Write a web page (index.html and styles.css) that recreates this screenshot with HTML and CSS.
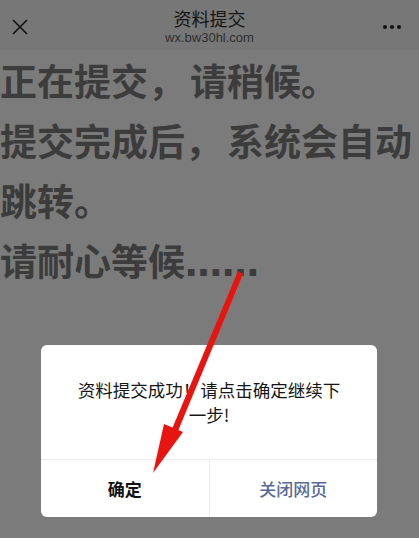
FILE: index.html
```html
<!DOCTYPE html>
<html lang="zh-CN">
<head>
<meta charset="UTF-8">
<meta name="viewport" content="width=device-width, initial-scale=1.0">
<title>资料提交</title>
<link rel="stylesheet" href="styles.css">
</head>
<body>
<div class="topbar">
    <div class="close-btn">
        <svg width="16" height="16" viewBox="0 0 16 16">
            <path d="M1 1 L15 15 M15 1 L1 15" stroke="#111" stroke-width="1.6" fill="none"/>
        </svg>
    </div>
    <div class="title-box">
        <div class="title">资料提交</div>
        <div class="subtitle">wx.bw30hl.com</div>
    </div>
    <div class="more-btn">
        <span class="dot"></span><span class="dot"></span><span class="dot"></span>
    </div>
</div>

<div class="content">
    <p>正在提交<span class="comma">，</span>请稍候。</p>
    <p>提交完成后<span class="comma">，</span>系统会自动跳转。</p>
    <p>请耐心等候<span class="dots">……</span></p>
</div>

<div class="dialog">
    <div class="dialog-msg">资料提交成功！请点击确定继续下一步!</div>
    <div class="dialog-btns">
        <div class="btn btn-ok">确定</div>
        <div class="btn btn-close">关闭网页</div>
    </div>
</div>

<!-- red arrow drawn over the page -->
<svg class="arrow" width="419" height="538" viewBox="0 0 419 538">
    <path d="M238 271 L243 274 L178 431 L172 429 Z" fill="#e8140f"/>
    <path d="M153 473 L164 424 L183 432 Z" fill="#e8140f"/>
</svg>
</body>
</html>
```

FILE: styles.css
```css
body {
    margin: 0;
    width: 419px;
    height: 538px;
    overflow: hidden;
    background-color: #7b7b7b;
    font-family: "Noto Sans CJK SC", "Liberation Sans", sans-serif;
    position: relative;
}

.topbar {
    height: 50px;
    background-color: #777777;
    display: grid;
    grid-template-columns: 1fr auto 1fr;
    align-items: center;
    padding: 0 18px 0 12px;
}

.close-btn {
    width: 16px;
    height: 16px;
    margin-top: 4px;
}

.close-btn svg {
    display: block;
}

.title-box {
    text-align: center;
    margin-left: 6px;
}

.title {
    font-size: 18px;
    line-height: 22px;
    color: #151515;
    margin-top: 2px;
}

.subtitle {
    font-size: 13px;
    line-height: 16px;
    color: #2e2e2e;
    font-family: "Liberation Sans", sans-serif;
    margin-top: 1px;
}

.more-btn {
    display: flex;
    justify-content: flex-end;
    gap: 3px;
    margin-top: 4px;
}

.dot {
    width: 4px;
    height: 4px;
    border-radius: 50%;
    background-color: #111;
}

.content {
    padding-top: 0;
}

.content p {
    margin: 0;
    font-size: 37px;
    line-height: 60px;
    font-weight: bold;
    color: #3c3c3c;
}

.comma {
    margin-right: 5px;
}

.dots {
    font-family: "DejaVu Sans", sans-serif;
}

.dialog {
    position: absolute;
    left: 41px;
    top: 345px;
    width: 336px;
    background-color: #fff;
    border-radius: 6px;
    overflow: hidden;
}

.dialog-msg {
    padding: 32px 30px;
    font-size: 17.5px;
    line-height: 25px;
    color: #161616;
    text-align: center;
}

.dialog-btns {
    display: flex;
    border-top: 1px solid #ececec;
}

.btn {
    flex: 1;
    height: 57px;
    line-height: 57px;
    text-align: center;
    font-size: 17px;
}

.btn-ok {
    font-weight: bold;
    color: #111;
    border-right: 1px solid #ececec;
}

.btn-close {
    color: #576b95;
    font-weight: 500;
}

.arrow {
    position: absolute;
    left: 0;
    top: 0;
}
```
